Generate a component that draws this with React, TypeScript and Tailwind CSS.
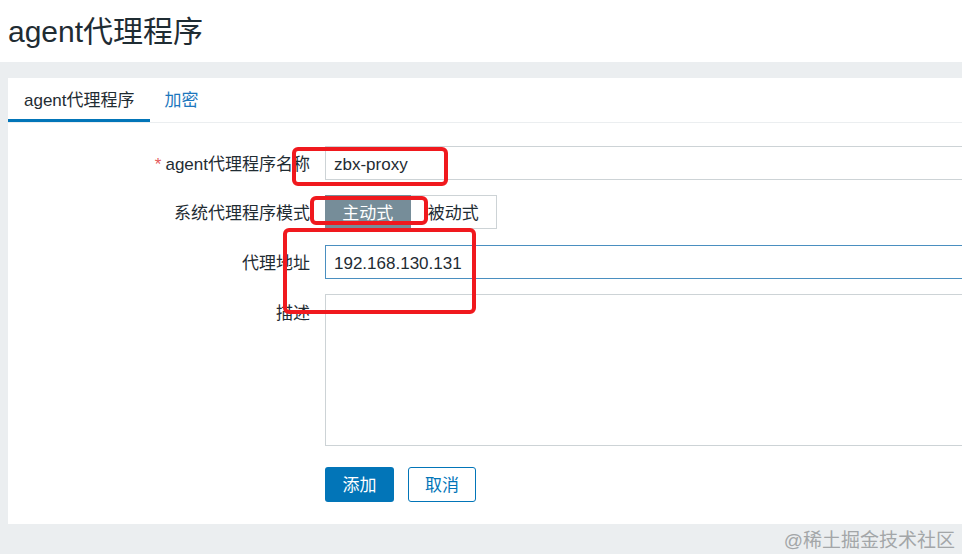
import React from "react";

const font = { fontFamily: '"Liberation Sans", Arial, "Noto Sans CJK SC", sans-serif' };

export default function App() {
  return (
    <div
      className="w-[962px] h-[554px] overflow-hidden bg-[#ebeef0] text-[#1f2c33] relative"
      style={font}
    >
      {/* Header */}
      <div className="h-[62px] bg-white flex items-center pl-[8px]">
        <h1 className="text-[30px] leading-none font-normal pt-[1px] text-[#1f2c33]">agent代理程序</h1>
      </div>

      {/* Panel area */}
      <div className="pt-[16px] pl-[8px]">
        <div className="bg-white h-[446px] overflow-hidden">
          {/* Tabs */}
          <div className="flex h-[45px] border-b border-[#ebeef0]">
            <div className="h-full flex items-center pl-[16px] pr-[15px] border-b-[3px] border-[#0275b8] text-[17px] text-[#1f2c33] pt-[4px]">
              agent代理程序
            </div>
            <div className="h-full flex items-center pl-[15px] text-[17px] text-[#1d77bd] pt-[1px]">加密</div>
          </div>

          {/* Form */}
          <div className="pt-[23px] flex flex-col">
            {/* Row 1 */}
            <div className="flex items-center">
              <div className="w-[317px] pr-[15px] pt-[3px] text-right text-[17px] leading-none">
                <span className="text-[#e45959] mr-[4px]">*</span>agent代理程序名称
              </div>
              <div className="flex-1 h-[34px] border border-[#cdd3d6] border-r-0 flex items-center pl-[8px] pt-[3px] text-[17px] text-[#1f2c33]">
                zbx-proxy
              </div>
            </div>

            {/* Row 2 */}
            <div className="flex items-center mt-[15px]">
              <div className="w-[317px] pr-[15px] pt-[3px] text-right text-[17px] leading-none">系统代理程序模式</div>
              <div className="flex h-[34px] border border-[#cdd3d6] w-[172px]">
                <div className="w-[86px] -my-px -ml-px bg-[#768d99] text-white text-[17px] pt-[3px] flex items-center justify-center">
                  主动式
                </div>
                <div className="w-[86px] text-[17px] pt-[3px] flex items-center justify-center text-[#1f2c33]">被动式</div>
              </div>
            </div>

            {/* Row 3 */}
            <div className="flex items-center mt-[16px]">
              <div className="w-[317px] pr-[15px] pt-[3px] text-right text-[17px] leading-none">代理地址</div>
              <div className="flex-1 h-[34px] border border-[#4a8fc0] border-r-0 flex items-center pl-[8px] pt-[3px] text-[17px] text-[#1f2c33]">
                192.168.130.131
              </div>
            </div>

            {/* Row 4 */}
            <div className="flex items-start mt-[15px]">
              <div className="w-[317px] pr-[15px] pt-[10px] text-right text-[17px] leading-[20px]">描述</div>
              <div className="flex-1 h-[152px] border border-[#cdd3d6] border-r-0"></div>
            </div>

            {/* Buttons */}
            <div className="flex mt-[21px] pl-[317px] gap-[14px]">
              <button className="w-[69px] h-[35px] rounded-[3px] bg-[#0275b8] text-white text-[17px] pt-[2px] flex items-center justify-center">
                添加
              </button>
              <button className="w-[68px] h-[35px] rounded-[3px] border border-[#0275b8] bg-white text-[#0275b8] text-[17px] pt-[2px] flex items-center justify-center">
                取消
              </button>
            </div>
          </div>
        </div>
      </div>

      {/* Bottom gray strip with watermark */}
      <div className="h-[30px] flex items-center justify-end pr-[7px]">
        <span className="text-[19px] text-[#a3a6a8] leading-none pt-[2px]">@稀土掘金技术社区</span>
      </div>

      {/* Red annotation boxes */}
      <div className="absolute left-[292px] top-[147px] w-[156px] h-[39px] border-[4px] border-[#f0191e] rounded-[6px]"></div>
      <div className="absolute left-[310px] top-[196px] w-[118px] h-[29px] border-[4px] border-[#f0191e] rounded-[6px]"></div>
      <div className="absolute left-[283px] top-[228px] w-[193px] h-[86px] border-[4px] border-[#f0191e] rounded-[6px]"></div>
    </div>
  );
}
